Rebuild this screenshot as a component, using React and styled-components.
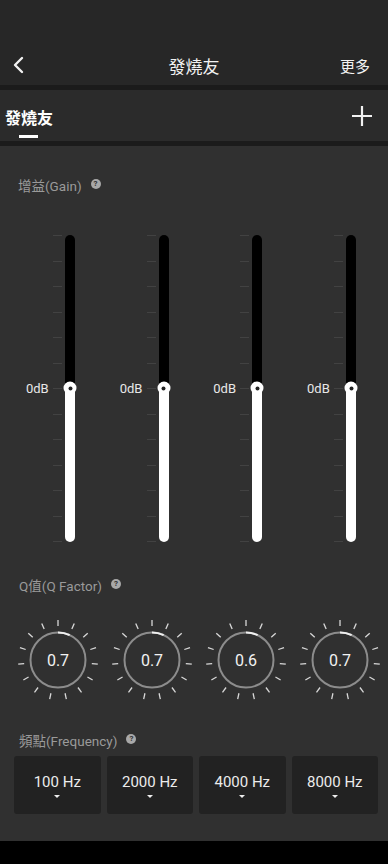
import React from 'react'
import styled, { createGlobalStyle } from 'styled-components'

const GlobalStyle = createGlobalStyle`
  html, body { margin: 0; padding: 0; background: #000; }
  body { font-family: Roboto, "Noto Sans CJK TC", sans-serif; }
`

const Screen = styled.div`
  width: 388px;
  height: 864px;
  display: flex;
  flex-direction: column;
  background: #000;
  overflow: hidden;
`

const StatusBar = styled.div`
  height: 45px;
  background: #272727;
`

const Header = styled.div`
  height: 40px;
  background: #272727;
  display: flex;
  align-items: center;
  justify-content: space-between;
  padding: 0 18px 0 12px;
  position: relative;
  border-bottom: 5px solid #1b1b1b;
`

const Title = styled.div`
  position: absolute;
  left: 0;
  right: 0;
  text-align: center;
  color: #f2f2f2;
  font-size: 17px;
  font-family: "Noto Sans CJK TC", sans-serif;
  pointer-events: none;
`

const More = styled.div`
  color: #f2f2f2;
  font-size: 15px;
  font-family: "Noto Sans CJK TC", sans-serif;
`

const TabBar = styled.div`
  height: 51px;
  background: #2b2b2b;
  display: flex;
  align-items: center;
  justify-content: space-between;
  padding: 0 15px 0 5px;
  border-bottom: 5px solid #1b1b1b;
`

const Tab = styled.div`
  position: relative;
  color: #fff;
  font-size: 16px;
  font-weight: 700;
  font-family: "Noto Sans CJK TC", sans-serif;
  line-height: 22px;
  margin-top: 2px;
  &::after {
    content: '';
    position: absolute;
    left: 14px;
    width: 19px;
    height: 3px;
    bottom: -10px;
    background: #fff;
  }
`

const Content = styled.div`
  flex: 1;
  background: #303030;
  display: flex;
  flex-direction: column;
`

const SectionLabel = styled.div`
  display: flex;
  align-items: center;
  gap: 9px;
  height: 20px;
  padding-left: ${p => p.$left || 18}px;
  margin-top: ${p => p.$top}px;
  color: #9a9a9a;
  font-size: 13.5px;
`

const Help = styled.span`
  width: 10px;
  height: 10px;
  border-radius: 50%;
  background: #a8a8a8;
  color: #303030;
  font-size: 8px;
  font-weight: 700;
  line-height: 10px;
  text-align: center;
  margin-top: -3px;
`

const SliderGrid = styled.div`
  margin-top: 40px;
  display: grid;
  grid-template-columns: repeat(4, 93.7px);
  height: 307px;
`

const SliderCol = styled.div`
  position: relative;
  display: flex;
  height: 100%;
`

const DbLabel = styled.div`
  position: absolute;
  right: 45px;
  top: ${p => p.$pos}px;
  transform: translateY(-50%);
  color: #e8e8e8;
  font-size: 13px;
`

const Ticks = styled.div`
  margin-left: 53px;
  width: 9px;
  height: 100%;
  display: flex;
  flex-direction: column;
  justify-content: space-between;
`

const Tick = styled.div`
  height: 1px;
  background: #424242;
`

const Track = styled.div`
  position: relative;
  margin-left: 3px;
  width: 10px;
  height: 100%;
  border-radius: 5px;
  background: linear-gradient(to bottom, #000 0, #000 ${p => p.$pos}px, #fff ${p => p.$pos}px, #fff 100%);
`

const Thumb = styled.div`
  position: absolute;
  left: 50%;
  top: ${p => p.$pos}px;
  width: 13px;
  height: 13px;
  border-radius: 50%;
  background: #fff;
  transform: translate(-50%, -50%);
  &::after {
    content: '';
    position: absolute;
    left: 4.5px;
    top: 4.5px;
    width: 4px;
    height: 4px;
    border-radius: 50%;
    background: #222;
  }
`

const KnobRow = styled.div`
  margin-top: 18px;
  padding-left: 11px;
  display: grid;
  grid-template-columns: repeat(4, 94px);
`

const KnobWrap = styled.div`
  position: relative;
  width: 94px;
  height: 94px;
`

const KnobValue = styled.div`
  position: absolute;
  inset: 0;
  display: flex;
  align-items: center;
  justify-content: center;
  color: #f2f2f2;
  font-size: 16px;
`

const FreqRow = styled.div`
  margin-top: 6px;
  padding: 0 10px 0 14px;
  display: grid;
  grid-template-columns: repeat(4, 1fr);
  gap: 6px;
`

const FreqBox = styled.div`
  height: 58px;
  background: #222222;
  border-radius: 3px;
  display: flex;
  flex-direction: column;
  align-items: center;
  justify-content: center;
  color: #ececec;
  font-size: 15px;
  gap: 4px;
`

const Caret = styled.div`
  width: 0;
  height: 0;
  border-left: 3px solid transparent;
  border-right: 3px solid transparent;
  border-top: 3px solid #eee;
`

const BottomBar = styled.div`
  height: 23px;
  background: #000;
`

const ticks = Array.from({ length: 13 })
const knobTicks = Array.from({ length: 15 }, (_, i) => -168 + i * 24)

function Knob({ value }) {
  const c = 47
  const r = 27.5
  const arcEnd = 25 * Math.PI / 180
  return (
    <KnobWrap>
      <svg width="94" height="94" viewBox="0 0 94 94">
        {knobTicks.map(a => {
          const rad = a * Math.PI / 180
          const s = Math.sin(rad)
          const k = -Math.cos(rad)
          return (
            <line key={a} x1={c + s * 34} y1={c + k * 34} x2={c + s * 40} y2={c + k * 40}
              stroke="#d8d8d8" strokeWidth="1.3" />
          )
        })}
        <circle cx={c} cy={c} r={r} fill="none" stroke="#8c8c8c" strokeWidth="2" />
        <path d={`M ${c} ${c - r} A ${r} ${r} 0 0 1 ${c + Math.sin(arcEnd) * r} ${c - Math.cos(arcEnd) * r}`}
          fill="none" stroke="#f0f0f0" strokeWidth="2" />
      </svg>
      <KnobValue>{value}</KnobValue>
    </KnobWrap>
  )
}

export default function App() {
  const thumbPos = 153
  return (
    <Screen>
      <GlobalStyle />
      <StatusBar />
      <Header>
        <svg width="14" height="20" viewBox="0 0 14 20">
          <path d="M10 3 L3 10 L10 17" fill="none" stroke="#f2f2f2" strokeWidth="2.4" strokeLinecap="round" strokeLinejoin="round" />
        </svg>
        <Title>發燒友</Title>
        <More>更多</More>
      </Header>
      <TabBar>
        <Tab>發燒友</Tab>
        <svg width="22" height="22" viewBox="0 0 22 22">
          <path d="M11 1 V21 M1 11 H21" stroke="#f2f2f2" strokeWidth="2.2" />
        </svg>
      </TabBar>
      <Content>
        <SectionLabel $top={29}>增益(Gain)<Help>?</Help></SectionLabel>
        <SliderGrid>
          {[0, 1, 2, 3].map(i => (
            <SliderCol key={i}>
              <DbLabel $pos={thumbPos}>0dB</DbLabel>
              <Ticks>
                {ticks.map((_, j) => <Tick key={j} />)}
              </Ticks>
              <Track $pos={thumbPos}>
                <Thumb $pos={thumbPos} />
              </Track>
            </SliderCol>
          ))}
        </SliderGrid>
        <SectionLabel $top={33} $left={19}>Q值(Q Factor)<Help>?</Help></SectionLabel>
        <KnobRow>
          {['0.7', '0.7', '0.6', '0.7'].map((v, i) => <Knob key={i} value={v} />)}
        </KnobRow>
        <SectionLabel $top={23} $left={19}>頻點(Frequency)<Help>?</Help></SectionLabel>
        <FreqRow>
          {['100 Hz', '2000 Hz', '4000 Hz', '8000 Hz'].map(f => (
            <FreqBox key={f}>
              {f}
              <Caret />
            </FreqBox>
          ))}
        </FreqRow>
      </Content>
      <BottomBar />
    </Screen>
  )
}
